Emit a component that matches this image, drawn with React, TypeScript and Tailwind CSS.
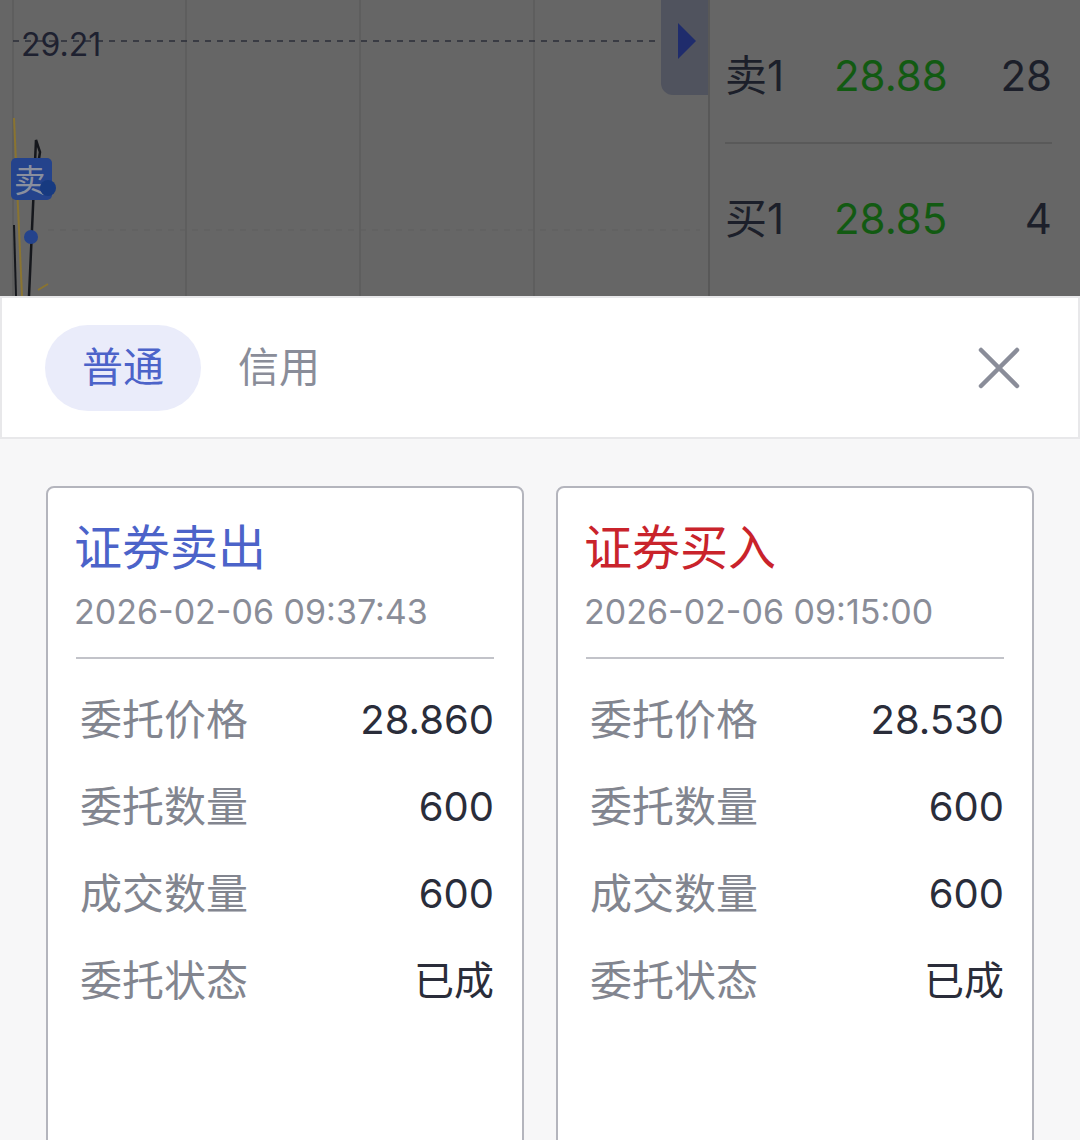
import React from "react";

const font = { fontFamily: 'Inter, "Noto Sans CJK SC", "Noto Sans", sans-serif' };

type Order = {
  title: string;
  side: "sell" | "buy";
  time: string;
  price: string;
  qty: string;
  filled: string;
  status: string;
};

const orders: Order[] = [
  { title: "证券卖出", side: "sell", time: "2026-02-06 09:37:43", price: "28.860", qty: "600", filled: "600", status: "已成" },
  { title: "证券买入", side: "buy", time: "2026-02-06 09:15:00", price: "28.530", qty: "600", filled: "600", status: "已成" },
];

function Chart() {
  return (
    <div className="relative flex-1 h-full">
      <svg width="708" height="296" viewBox="0 0 708 296" className="block">
        {[13, 186, 360, 534].map((x) => (
          <line key={x} x1={x} y1={0} x2={x} y2={296} stroke="#5c5c5c" strokeWidth={1.5} />
        ))}
        <line x1={13} y1={41} x2={700} y2={41} stroke="#2b2e38" strokeWidth={1.5} strokeDasharray="6 6" />
        <line x1={48} y1={230} x2={700} y2={230} stroke="#5e5e5e" strokeWidth={1} strokeDasharray="6 6" />
        <text x={21} y={56} fontSize={32} fill="#1e2130" fontFamily="Inter, sans-serif">29.21</text>
        <path d="M14 118 L22 296" stroke="#8a7430" strokeWidth={2} fill="none" />
        <path d="M38 290 L48 284" stroke="#8a7430" strokeWidth={2} fill="none" />
        <path d="M14 225 L16 296" stroke="#15171c" strokeWidth={2} fill="none" />
        <path d="M29 296 L36 140 L40 152 L38 165" stroke="#15171c" strokeWidth={2.5} fill="none" />
        <rect x={11} y={158} width={41} height={42} rx={5} fill="#24438c" />
        <text x={14} y={192} fontSize={32} fill="#8a8f9e" fontFamily='"Noto Sans CJK SC", sans-serif'>卖</text>
        <circle cx={48} cy={188} r={8} fill="#173a80" />
        <circle cx={31} cy={237} r={7} fill="#24438c" />
      </svg>
      <div className="absolute right-0 top-0 w-[47px] h-[95px] bg-[#50535e] rounded-bl-xl flex items-center justify-end pr-[12px] pb-[14px]">
        <svg width="18" height="36" viewBox="0 0 18 36">
          <path d="M0 0 L18 18 L0 36 Z" fill="#1f2c6c" />
        </svg>
      </div>
    </div>
  );
}

function BookRow({ label, price, qty }: { label: string; price: string; qty: string }) {
  return (
    <div className="h-[96px] flex items-center text-[42px] leading-none">
      <span className="w-[109px] text-[#1c1f2a]">{label}</span>
      <span className="text-[#125a12]">{price}</span>
      <span className="ml-auto text-[#1c1f2a]">{qty}</span>
    </div>
  );
}

function OrderBook() {
  return (
    <div className="w-[372px] h-full border-l-2 border-[#585858] pl-[15px] pr-[28px] overflow-hidden">
      <div className="mt-[-68px] flex flex-col">
        <BookRow label="卖2" price="28.89" qty="12" />
        <BookRow label="卖1" price="28.88" qty="28" />
        <div className="h-[47px] pt-[18px]">
          <div className="h-[2px] bg-[#595959]" />
        </div>
        <BookRow label="买1" price="28.85" qty="4" />
        <BookRow label="买2" price="28.84" qty="6" />
      </div>
    </div>
  );
}

function OrderCard({ o }: { o: Order }) {
  const rows = [
    ["委托价格", o.price],
    ["委托数量", o.qty],
    ["成交数量", o.filled],
    ["委托状态", o.status],
  ];
  return (
    <div className="bg-white border-2 border-[#b4b5bd] rounded-lg px-[28px] pt-[30px] min-h-[720px]">
      <div className={`text-[48px] leading-[60px] -ml-[2px] ${o.side === "sell" ? "text-[#4c63c9]" : "text-[#c9232b]"}`}>
        {o.title}
      </div>
      <div className="text-[34px] leading-[42px] mt-[13px] -ml-[2px] text-[#8a8d98]">{o.time}</div>
      <div className="h-[2px] bg-[#c2c3c9] mt-[24px]" />
      <div className="pt-[17px] flex flex-col">
        {rows.map(([k, v]) => (
          <div key={k} className="h-[87px] flex items-center justify-between leading-none">
            <span className="text-[#82858f] text-[42px] pl-[4px]">{k}</span>
            <span className="text-[#2a2d3a] text-[40px]">{v}</span>
          </div>
        ))}
      </div>
    </div>
  );
}

export default function App() {
  return (
    <div className="w-[1080px] h-[1140px] overflow-hidden bg-[#f7f7f8]" style={font}>
      <div className="h-[296px] bg-[#666666] flex overflow-hidden">
        <Chart />
        <OrderBook />
      </div>
      <div className="h-[143px] bg-white border-2 border-[#e8e8ea] flex items-center pl-[43px] pr-[58px]">
        <div className="h-[86px] px-[37px] rounded-full bg-[#eaecfa] text-[#4c63c9] text-[41px] flex items-center">普通</div>
        <div className="ml-[37px] text-[41px] text-[#8a8d99]">信用</div>
        <svg className="ml-auto" width="42" height="42" viewBox="0 0 42 42">
          <path d="M3 3 L39 39 M39 3 L3 39" stroke="#8a8d99" strokeWidth={4.5} strokeLinecap="round" />
        </svg>
      </div>
      <div className="grid grid-cols-2 gap-[32px] px-[46px] pt-[47px]">
        {orders.map((o) => (
          <OrderCard key={o.title} o={o} />
        ))}
      </div>
    </div>
  );
}
